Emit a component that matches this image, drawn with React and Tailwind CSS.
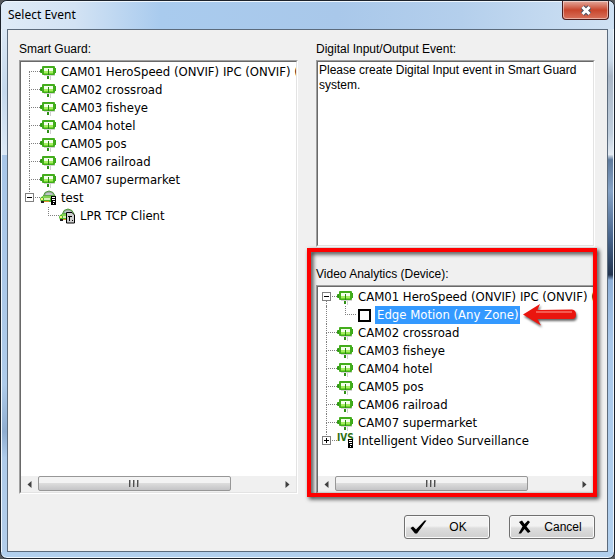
import { useState } from "react";

const cameras = [
  "CAM02 crossroad",
  "CAM03 fisheye",
  "CAM04 hotel",
  "CAM05 pos",
  "CAM06 railroad",
  "CAM07 supermarket",
];

function CameraIcon() {
  return (
    <svg width="17" height="15" viewBox="0 0 17 15" className="shrink-0" aria-hidden="true">
      <rect x="4" y="10" width="11" height="1" fill="#d4d4d4" />
      <rect x="10" y="11" width="1" height="4" fill="#cfcfcf" />
      <rect x="0" y="4" width="3" height="4" rx="1" fill="#2f9a12" />
      <rect x="14" y="3" width="2" height="5" fill="#3aa81a" />
      <rect x="2" y="1" width="13" height="9" rx="1" fill="#43ad1c" />
      <rect x="4" y="3" width="9" height="3" fill="#f4feec" />
      <rect x="4" y="6" width="9" height="2" fill="#a6ee62" />
      <rect x="4" y="8" width="9" height="1" fill="#6fd62c" />
      <rect x="8" y="4" width="1" height="6" fill="#2b8a12" />
      <rect x="7" y="11" width="2" height="3" fill="#2f8f16" />
    </svg>
  );
}

function CarShape() {
  return (
    <>
      <path d="M3.500 6 L5 2.500 Q9 -0.500 13 2.500 L15 6 Z" fill="#9aa49c" stroke="#4d9a38" />
      <path d="M5.500 5 L6.500 3 H11.500 L13 5 Z" fill="#bcc6c6" />
      <path d="M0 9 Q1 5.500 6 5.500 H13 Q16 6 16 9 V12 H1 Z" fill="#4fb526" />
      <path d="M3 7 H12" stroke="#b9f07f" strokeWidth="1" />
      <rect x="1" y="8" width="2" height="2" fill="#eef57a" />
      <rect x="4" y="8" width="6" height="2" fill="#d4efb6" />
      <rect x="1" y="11" width="3" height="2" fill="#222" />
      <rect x="4" y="11" width="5" height="1" fill="#e0902a" />
    </>
  );
}

function ServerShape() {
  return (
    <>
      <rect x="11" y="6" width="5" height="9" fill="#000" />
      <rect x="12" y="7" width="3" height="1" fill="#fff" />
      <rect x="12" y="9" width="3" height="1" fill="#fff" />
      <rect x="13" y="11" width="2" height="1" fill="#fff" />
      <rect x="13" y="13" width="1" height="1" fill="#fff" />
    </>
  );
}

function CarServerIcon() {
  return (
    <svg width="17" height="16" viewBox="0 0 17 16" className="shrink-0" aria-hidden="true">
      <CarShape />
      <ServerShape />
    </svg>
  );
}

function CarClientIcon() {
  return (
    <svg width="17" height="16" viewBox="0 0 17 16" className="shrink-0" aria-hidden="true">
      <CarShape />
      <path d="M7.500 4.500 H13 L15.500 7 V15 H7.500 Z" fill="#d0d0d0" stroke="#000" />
      <path d="M9 8.500 H13 M10.500 8.500 V13 M13 12.500 H14" stroke="#000" fill="none" />
    </svg>
  );
}

function IvsIcon() {
  return (
    <svg width="17" height="16" viewBox="0 0 17 16" className="shrink-0" aria-hidden="true">
      <text x="0" y="8" fontSize="10" fontWeight="700" fontFamily="DejaVu Sans Condensed, sans-serif" fill="#2f6f12">
        IVS
      </text>
      <ServerShape />
    </svg>
  );
}

function RedArrow() {
  return (
    <svg
      width="54"
      height="22"
      viewBox="0 0 54 22"
      className="ml-[3px] shrink-0 drop-shadow-[1px_2px_1px_rgba(0,0,0,0.6)]"
      aria-hidden="true"
    >
      <path
        d="M0 10.500 L17 0 L14.500 6 L49 5.500 Q53 6 53 10.500 Q53 15 49 15 L14.500 15 L18 21.500 Z"
        fill="#ea150e"
      />
      <path d="M13 8 H49" stroke="#f55a50" strokeWidth="2" />
    </svg>
  );
}

// One step of indentation with the dotted tree lines
function Gutter({ first, last, open, onToggle }) {
  return (
    <div className="relative flex h-full w-[19px] shrink-0 pl-2">
      <div className="grid flex-1 grid-rows-2">
        <div className={`border-b border-dotted border-[#808080] ${first ? "" : "border-l"}`} />
        <div className={`border-dotted border-[#808080] ${last ? "" : "border-l"}`} />
      </div>
      {onToggle && (
        <button
          type="button"
          onClick={onToggle}
          aria-label={open ? "Collapse" : "Expand"}
          className="absolute top-1 left-1 flex size-[9px] items-center justify-center border border-[#808080] bg-white"
        >
          <svg width="5" height="5" viewBox="0 0 5 5" aria-hidden="true">
            <path d={open ? "M0 2.5H5" : "M0 2.5H5M2.5 0V5"} stroke="#000" />
          </svg>
        </button>
      )}
    </div>
  );
}

function Row({ icon, label, line, child, selected, after, htmlFor, ...gutter }) {
  const Label = htmlFor ? "label" : "span";
  return (
    <li role="treeitem" aria-selected={!!selected} className="flex h-[18px] items-center">
      {child && (
        <div className="h-full w-[19px] shrink-0 pl-2">
          {line && <div className="h-full border-l border-dotted border-[#808080]" />}
        </div>
      )}
      <Gutter {...gutter} />
      {icon}
      <Label
        htmlFor={htmlFor}
        className={`ml-[2px] px-[2px] leading-[18px] whitespace-nowrap ${selected ? "bg-[#3399ff] text-white" : ""}`}
      >
        {label}
      </Label>
      {after}
    </li>
  );
}

function Tree({ label, children }) {
  return (
    <ul
      role="tree"
      aria-label={label}
      className="flex-1 overflow-hidden pt-px font-['DejaVu_Sans_Condensed','DejaVu_Sans',sans-serif] text-[13px]"
    >
      {children}
    </ul>
  );
}

function ScrollBar() {
  return (
    <div className="flex h-4 bg-[#f0f0f0]">
      <button type="button" aria-label="Scroll left" className="flex w-[17px] items-center justify-center">
        <svg width="5" height="7" viewBox="0 0 5 7" aria-hidden="true">
          <path d="M4.500 0 V7 L0.500 3.500 Z" fill="#404040" />
        </svg>
      </button>
      <div className="flex-1">
        <div className="flex h-[15px] w-4/5 items-center justify-center gap-[2px] rounded-[2px] border border-[#979797] bg-linear-to-b from-[#f3f3f3] from-45% via-[#dcdcdc] via-50% to-[#c4c4c6]">
          <span className="h-[7px] w-[2px] border-l border-[#505050] bg-[#a8a8a8]" />
          <span className="h-[7px] w-[2px] border-l border-[#505050] bg-[#a8a8a8]" />
          <span className="h-[7px] w-[2px] border-l border-[#505050] bg-[#a8a8a8]" />
        </div>
      </div>
      <button type="button" aria-label="Scroll right" className="flex w-[17px] items-center justify-center">
        <svg width="5" height="7" viewBox="0 0 5 7" aria-hidden="true">
          <path d="M0.500 0 V7 L4.500 3.500 Z" fill="#404040" />
        </svg>
      </button>
    </div>
  );
}

function Sunken({ className = "flex-1", children }) {
  return (
    <div
      className={`flex min-w-0 flex-col border border-t-[#a0a0a0] border-r-white border-b-white border-l-[#a0a0a0] ${className}`}
    >
      <div className="flex flex-1 flex-col overflow-hidden border border-t-[#696969] border-r-[#e3e3e3] border-b-[#e3e3e3] border-l-[#696969] bg-white">
        {children}
      </div>
    </div>
  );
}

function Heading({ children }) {
  return <h2 className="h-5 text-xs leading-[18px]">{children}</h2>;
}

function DialogButton({ icon, children }) {
  return (
    <button
      type="button"
      className="flex h-6 w-[86px] items-center rounded-[3px] border border-[#707070] bg-linear-to-b from-[#f2f2f2] from-45% via-[#dddddd] via-55% to-[#cfcfcf] pl-[5px] text-xs shadow-[inset_0_0_0_1px_#fafafa]"
    >
      {icon}
      <span className="flex-1 text-center">{children}</span>
    </button>
  );
}

export default function App() {
  const [testOpen, setTestOpen] = useState(true);
  const [camOpen, setCamOpen] = useState(true);
  const [ivsOpen, setIvsOpen] = useState(false);
  const [edgeMotion, setEdgeMotion] = useState(false);

  return (
    <div className="flex min-h-screen bg-[#55585c] font-['Liberation_Sans',Arial,sans-serif] text-black">
      <div className="flex flex-1 flex-col overflow-hidden rounded-[7px] border border-[#1c222b] bg-[#b2d0ee] pb-[6px] shadow-[inset_0_-1px_0_#eef6fd]">
        <header className="flex h-7 justify-between rounded-t-[6px] bg-[linear-gradient(to_right,#dfebf7_0%,#d3e3f4_12%,#a9cbee_26%,#a9c8ea_55%,#b4cfec_75%,#cfe1f3_100%)] pr-[5px] pl-[7px] shadow-[inset_0_1px_0_#eef6fd]">
          <h1 className="font-['Noto_Sans',sans-serif] text-xs leading-[28px]">Select Event</h1>
          <button
            type="button"
            aria-label="Close"
            className="flex h-[19px] w-[47px] items-center justify-center rounded-b-[4px] border border-t-0 border-[#4a1c1c] bg-linear-to-b from-[#e2a89c] from-0% via-[#c8452c] via-50% to-[#d8705a] shadow-[inset_0_0_0_1px_rgba(255,255,255,0.45)]"
          >
            <svg width="12" height="11" viewBox="0 0 12 11" aria-hidden="true">
              <path d="M2.500 2 L9.500 9 M9.500 2 L2.500 9" stroke="#4b5263" strokeWidth="5" />
              <path d="M2.500 2 L9.500 9 M9.500 2 L2.500 9" stroke="#fff" strokeWidth="3" />
            </svg>
          </button>
        </header>

        <div className="flex flex-1">
          <div className="w-[6px] border-l border-[#eef6fd] bg-[linear-gradient(to_bottom,#dbe8f5_0%,#c6d9ec_12%,#dce9f6_24%,#a8c6e8_24%,#aecbea_68%,#8fadd0_77%,#aecbea_82%,#b2cdea_100%)]" />
          <main className="flex min-w-0 flex-1 flex-col border border-[#5c6b7c] bg-[#f0f0f0] pt-[10px] pr-3 pb-3 pl-[11px]">
            <div className="grid flex-1 grid-cols-2 gap-[18px]">
              <section className="flex min-w-0 flex-col">
                <Heading>Smart Guard:</Heading>
                <Sunken>
                  <Tree label="Smart Guard">
                    <Row first icon={<CameraIcon />} label="CAM01 HeroSpeed (ONVIF) IPC (ONVIF) (" />
                    {cameras.map((name) => (
                      <Row key={name} icon={<CameraIcon />} label={name} />
                    ))}
                    <Row
                      last
                      icon={<CarServerIcon />}
                      label="test"
                      open={testOpen}
                      onToggle={() => setTestOpen(!testOpen)}
                    />
                    {testOpen && <Row child last icon={<CarClientIcon />} label="LPR TCP Client" />}
                  </Tree>
                  <ScrollBar />
                </Sunken>
              </section>

              <div className="flex min-w-0 flex-col gap-[18px]">
                <section className="flex flex-col">
                  <Heading>Digital Input/Output Event:</Heading>
                  <Sunken className="h-[187px]">
                    <p className="px-px pt-px text-xs leading-[15px]">
                      Please create Digital Input event in Smart Guard system.
                    </p>
                  </Sunken>
                </section>

                <section className="relative flex flex-1 flex-col">
                  <Heading>Video Analytics (Device):</Heading>
                  <Sunken>
                    <Tree label="Video Analytics (Device)">
                      <Row
                        first
                        icon={<CameraIcon />}
                        label="CAM01 HeroSpeed (ONVIF) IPC (ONVIF) ("
                        open={camOpen}
                        onToggle={() => setCamOpen(!camOpen)}
                      />
                      {camOpen && (
                        <Row
                          child
                          line
                          last
                          selected
                          htmlFor="edge-motion"
                          icon={
                            <span className="flex w-[17px] shrink-0 justify-center">
                              <input
                                id="edge-motion"
                                type="checkbox"
                                checked={edgeMotion}
                                onChange={(e) => setEdgeMotion(e.target.checked)}
                                className="size-[13px] appearance-none border-2 border-black bg-white checked:bg-gray-500"
                              />
                            </span>
                          }
                          label="Edge Motion (Any Zone)"
                          after={<RedArrow />}
                        />
                      )}
                      {cameras.map((name) => (
                        <Row key={name} icon={<CameraIcon />} label={name} />
                      ))}
                      <Row
                        last
                        icon={<IvsIcon />}
                        label="Intelligent Video Surveillance"
                        open={ivsOpen}
                        onToggle={() => setIvsOpen(!ivsOpen)}
                      />
                    </Tree>
                    <ScrollBar />
                  </Sunken>
                  <div className="pointer-events-none absolute -top-[17px] -right-[2px] -bottom-[3px] -left-[9px] border-4 border-[#fe0000] drop-shadow-[2px_2px_2px_rgba(0,0,0,0.8)]" />
                </section>
              </div>
            </div>

            <footer className="flex justify-end gap-[19px] pt-[21px]">
              <DialogButton
                icon={
                  <svg width="17" height="14" viewBox="0 0 17 14" aria-hidden="true">
                    <path d="M0.500 8 L3 6.500 L6 9.500 L14.500 0.500 H16.500 L7 13.500 H5 Z" fill="#000" />
                  </svg>
                }
              >
                OK
              </DialogButton>
              <DialogButton
                icon={
                  <svg width="17" height="14" viewBox="0 0 17 14" aria-hidden="true">
                    <path
                      d="M4 2 L7 0.500 L9.500 4 L13 0.500 L15 2 L11.500 6.500 L15.500 11.500 L13 13 L9.500 9 L6 13.500 H3.500 L7.500 6.500 Z"
                      fill="#000"
                    />
                  </svg>
                }
              >
                Cancel
              </DialogButton>
            </footer>
          </main>
          <div className="w-[6px] border-r border-[#eef6fd] bg-[linear-gradient(to_bottom,#d5e4f2_0%,#c9d9e9_6%,#a9b6c6_9%,#bfcedd_20%,#e3eaf2_24%,#5f7b9d_25%,#86a3c6_31%,#47648b_40%,#22344f_47%,#8eb0d8_48%,#a9c8ea_60%,#b2d0ee_100%)]" />
        </div>
      </div>
    </div>
  );
}
